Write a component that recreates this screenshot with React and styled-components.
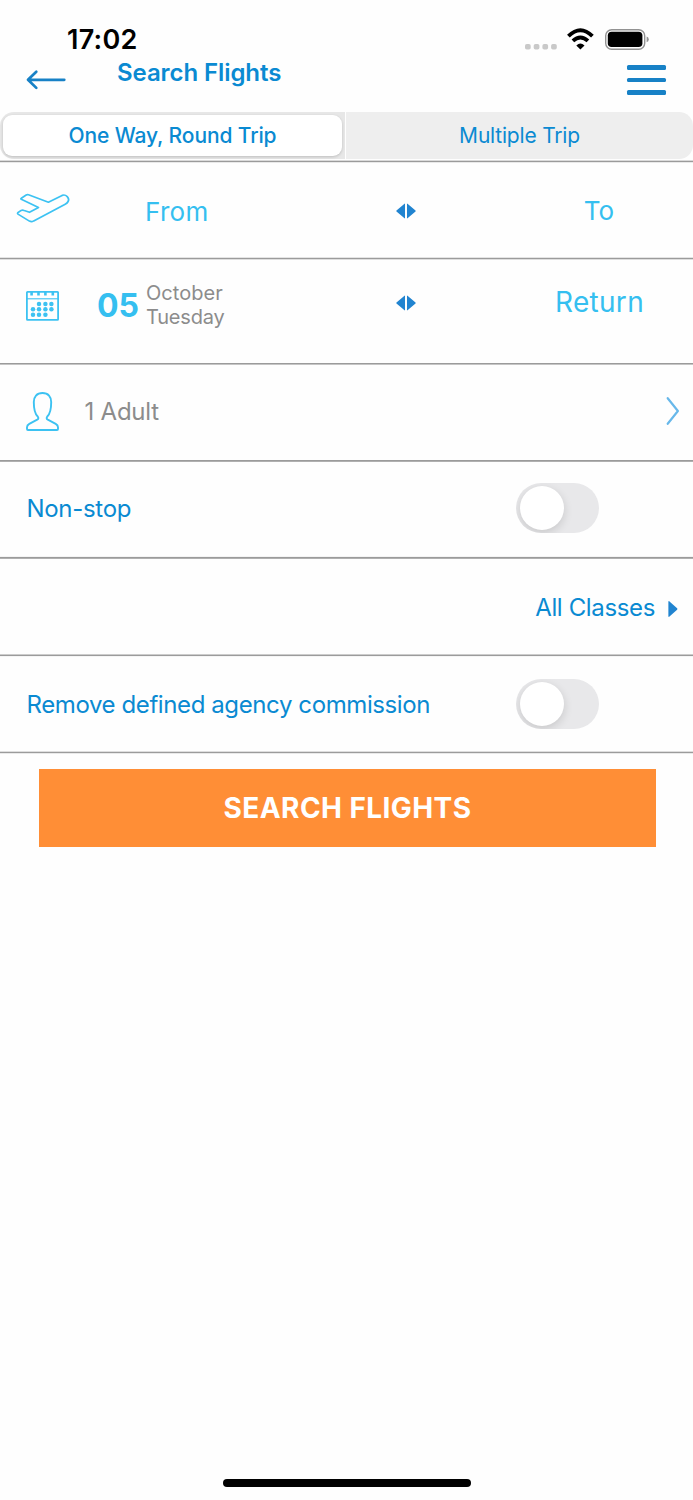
import React from "react";
import styled, { createGlobalStyle } from "styled-components";

const Global = createGlobalStyle`
  * { box-sizing: border-box; }
  body { margin: 0; background: #fefefe; font-family: Inter, "Liberation Sans", sans-serif; }
`;

const Screen = styled.main`
  display: flex;
  flex-direction: column;
  width: 693px;
  height: 1500px;
  background: #fefefe;
  overflow: hidden;
`;

const Text = styled.span`
  display: block;
  white-space: nowrap;
  color: ${(p) => p.$color || "#0a8ad2"};
  font-size: ${(p) => p.$size}px;
  font-weight: ${(p) => p.$weight || 400};
  letter-spacing: ${(p) => p.$track || 0}px;
  line-height: ${(p) => p.$line || 30}px;
`;

const StatusBar = styled.div`
  display: flex;
  justify-content: space-between;
  height: 58px;
  padding: 25px 44px 0 67px;
`;

const StatusIcons = styled.div`
  display: flex;
  align-items: flex-start;
  height: 30px;
`;

const Header = styled.header`
  display: flex;
  height: 54px;
  padding: 0 27px 0 26px;
`;

const BackButton = styled.button`
  display: block;
  width: 40px;
  height: 22px;
  margin: 11px 51px 0 0;
  padding: 0;
  border: 0;
  background: none;
`;

const MenuButton = styled.button`
  display: flex;
  flex-direction: column;
  justify-content: space-between;
  width: 39px;
  height: 30px;
  margin: 7px 0 0 auto;
  padding: 0;
  border: 0;
  background: none;
`;

const MenuBar = styled.span`
  display: block;
  height: 4.6px;
  border-radius: 1.5px;
  background: #1781c6;
`;

const Tabs = styled.nav`
  display: flex;
  gap: 1px;
  height: 47px;
`;

const TabSlot = styled.div`
  display: flex;
  width: ${(p) => (p.$active ? 345 : 347)}px;
  padding: ${(p) => (p.$active ? "3px 3px 3px 3px" : "0")};
  background: ${(p) => (p.$active ? "#e7e7e7" : "#eeeeee")};
  border-radius: ${(p) => (p.$active ? "14px 0 0 14px" : "0 14px 14px 0")};
`;

const Tab = styled.button`
  display: flex;
  flex: 1;
  align-items: center;
  justify-content: center;
  padding: ${(p) => (p.$active ? "1px 0 0" : "0")};
  border: 0;
  border-radius: 9px;
  font-family: inherit;
  background: ${(p) => (p.$active ? "#fff" : "transparent")};
  box-shadow: ${(p) => (p.$active ? "0 1px 3px rgba(0,0,0,.18)" : "none")};
`;

const Line = styled.hr`
  width: 100%;
  height: 3px;
  margin: 0;
  border: solid;
  border-width: 1px 0;
  border-color: ${(p) => p.$top} transparent ${(p) => p.$bottom};
  background: #9b9b9b;
  background-clip: padding-box;
`;

const Row = styled.section`
  display: flex;
  align-items: flex-start;
  height: ${(p) => p.$height}px;
  padding-left: ${(p) => p.$left || 0}px;
  padding-right: ${(p) => p.$right || 0}px;
`;

const Slot = styled.div`
  width: ${(p) => (p.$width ? `${p.$width}px` : "auto")};
  margin-top: ${(p) => p.$top}px;
  margin-left: ${(p) => p.$left || 0}px;
  display: flex;
  justify-content: ${(p) => p.$align || "flex-start"};
`;

const EndSlot = styled(Slot)`
  margin-left: auto;
  align-items: center;
  gap: 13px;
`;

const FromSlot = styled(Slot)`
  width: 251px;
`;

const DateGroup = styled.div`
  display: flex;
  width: 299px;
`;

const DateText = styled.div`
  margin: 21px 0 0 7px;
`;

const Switch = styled.button`
  width: 83px;
  height: 50px;
  margin-top: ${(p) => p.$top}px;
  margin-left: auto;
  padding: 3px 3px 3px 3.5px;
  border: 0;
  border-radius: 25px;
  background: #e8e8ea;
  overflow: hidden;
`;

const Knob = styled.span`
  display: block;
  width: 44px;
  height: 44px;
  border-radius: 50%;
  background: #fff;
  box-shadow: 0 3px 10px rgba(0, 0, 0, 0.14);
`;

const SearchButton = styled.button`
  display: flex;
  align-items: center;
  justify-content: center;
  width: 617px;
  height: 78px;
  margin: 15px 0 0 39px;
  padding: 0;
  border: 0;
  font-family: inherit;
  background: #ff8e36;
`;

const HomeIndicator = styled.div`
  width: 248px;
  height: 8px;
  margin: auto 0 13px 223px;
  border-radius: 4px;
  background: #000;
`;

const Art = styled.svg`
  display: block;
  flex: none;
  overflow: visible;
`;

const SwapIcon = () => (
  <Art width="20" height="16" viewBox="0 0 20 16" fill="#2184d0">
    <path d="M9 1.2V14.8Q9 15.8 8.2 15.1L.5 8.5Q0 8 .5 7.5L8.2 .9Q9 .2 9 1.2Z" />
    <path d="M11 1.2V14.8Q11 15.8 11.8 15.1L19.5 8.5Q20 8 19.5 7.5L11.8 .9Q11 .2 11 1.2Z" />
  </Art>
);

const dots = [
  [13, 12.9], [19.4, 12.9], [25.4, 12.9],
  [7, 18.2], [13, 18.2], [19.4, 18.2], [25.4, 18.2],
  [7, 23.7], [13, 23.7], [19.4, 23.7],
];

export default function App() {
  return (
    <>
      <Global />
      <Screen>
        <StatusBar>
          <Text $size={27} $weight={600} $track={0.25} $color="#000">17:02</Text>
          <StatusIcons>
            <Art width="124" height="24" viewBox="0 0 124 24">
              <g fill="#c9c9c9">
                {[0, 8.7, 17.4, 26.1].map((x) => (
                  <rect key={x} x={x} y="18.9" width="5.7" height="5.7" rx="1.8" />
                ))}
              </g>
              <g fill="none" stroke="#000" strokeWidth="3.8">
                <path d="M43.4 11.2Q55.4 -.8 67.4 11.2" />
                <path d="M47.9 15.9Q55.4 8.9 62.9 15.9" />
              </g>
              <path d="M55.4 24.6L51.3 20.5Q55.4 16.7 59.5 20.5Z" />
              <rect x="80.7" y="4.7" width="39" height="19.6" rx="6" fill="none" stroke="#929292" strokeWidth="1.4" />
              <rect x="82.8" y="6.8" width="34.6" height="15.3" rx="3.8" />
              <path d="M121.6 11.6Q123.8 12.3 123.8 14.4Q123.8 16.5 121.6 17.2Z" fill="#929292" />
            </Art>
          </StatusIcons>
        </StatusBar>
        <Header>
          <BackButton aria-label="Back">
            <Art width="40" height="22" viewBox="0 0 40 22" fill="none" stroke="#1781c6" strokeWidth="2.7" strokeLinecap="round" strokeLinejoin="round">
              <path d="M38.3 10.8H2M10.3 2.7L2 10.8L10.3 18.9" />
            </Art>
          </BackButton>
          <Text $size={24} $weight={600} $track={-0.08}>Search Flights</Text>
          <MenuButton aria-label="Menu"><MenuBar /><MenuBar /><MenuBar /></MenuButton>
        </Header>
        <Tabs>
          <TabSlot $active>
            <Tab $active><Text $size={21} $weight={500} $track={-0.12}>One Way, Round Trip</Text></Tab>
          </TabSlot>
          <TabSlot>
            <Tab><Text $size={21} $weight={400} $track={-0.2}>Multiple Trip</Text></Tab>
          </TabSlot>
        </Tabs>
        <Row $height={1} />
        <Line $top="#dadada" $bottom="#e9e9e9" />
        <Row $height={94} $left={16} $right={79}>
          <Slot $top={30} $width={129}>
            <Art width="54" height="30" viewBox="0 0 54 30" fill="none" stroke="#3cc2f2" strokeWidth="1.7" strokeLinejoin="round">
              <path d="M5.3 5.3L10.2 2Q11.2 1.3 12.5 1.7L32.4 9.2L46.1 2.4C49.9 .8 54 5.2 52.1 8.5Q51.3 10.1 49.2 11.2L17.7 27.9Q15.6 29.3 13.4 28.1L2 21.1Q1 20.3 2.1 19.5L5.2 17.4Q6.4 16.7 8.2 17.5L13.5 19.3L22.5 14.5L5.3 6.3Q4.5 5.8 5.3 5.3Z" />
            </Art>
          </Slot>
          <FromSlot $top={34}><Text $size={26} $track={0.3} $color="#35bff0">From</Text></FromSlot>
          <Slot $top={40}><SwapIcon /></Slot>
          <EndSlot $top={33}><Text $size={26} $color="#35bff0">To</Text></EndSlot>
        </Row>
        <Line $top="#e4e4e4" $bottom="#dedede" />
        <Row $height={102} $left={26} $right={49}>
          <Slot $top={31} $width={71}>
            <Art width="33" height="30" viewBox="0 0 33 30">
              <g fill="none" stroke="#3cc2f2" strokeWidth="1.8">
                <rect x=".9" y=".9" width="31.2" height="28" rx=".6" />
                <path d="M1 7.8H32" strokeWidth="1.1" />
                <path d="M5.6 1V4.4M12.5 1V4.4M19.4 1V4.4M26.8 1V4.4" strokeWidth="2.6" />
              </g>
              <g fill="#3cc2f2">
                {dots.map(([x, y]) => <circle key={`${x}-${y}`} cx={x} cy={y} r="2.25" />)}
              </g>
            </Art>
          </Slot>
          <DateGroup>
            <Slot $top={31} $width={42} $align="center"><Text $size={32} $weight={700} $color="#35bff0">05</Text></Slot>
            <DateText>
              <Text $size={20} $line={24} $track={0.05} $color="#8c8c8c">October</Text>
              <Text $size={20} $line={24} $track={-0.2} $color="#8c8c8c">Tuesday</Text>
            </DateText>
          </DateGroup>
          <Slot $top={35}><SwapIcon /></Slot>
          <EndSlot $top={27}><Text $size={28} $track={0.3} $color="#35bff0">Return</Text></EndSlot>
        </Row>
        <Line $top="#fefefe" $bottom="#c5c5c5" />
        <Row $height={94} $left={26} $right={14}>
          <Slot $top={27} $width={58.6}>
            <Art width="33" height="40" viewBox="0 0 33 40" fill="none" stroke="#3cc2f2" strokeWidth="1.9" strokeLinejoin="round">
              <path d="M16.5 1C10.7 1 7.8 4.8 7.8 10C7.8 16.5 8.5 21.4 11.7 24.5Q13.2 26.6 11.2 27.7L3.3 31.8Q1 33 1 35.3V37Q1 38 2 38H31Q32 38 32 37V35.3Q32 33 29.7 31.8L21.8 27.7Q19.8 26.6 21.3 24.5C24.5 21.4 25.2 16.5 25.2 10C25.2 4.8 22.3 1 16.5 1Z" />
            </Art>
          </Slot>
          <Slot $top={32}><Text $size={24} $track={-0.25} $color="#8c8c8c">1 Adult</Text></Slot>
          <EndSlot $top={32}>
            <Art width="13" height="28" viewBox="0 0 13 28" fill="none" stroke="#68b8ea" strokeWidth="2.2" strokeLinecap="round" strokeLinejoin="round">
              <path d="M1.7 1.2L11.9 14L1.7 26.8" />
            </Art>
          </EndSlot>
        </Row>
        <Line $top="#fefefe" $bottom="#b0b0b0" />
        <Row $height={94} $left={26.5} $right={94}>
          <Slot $top={32}><Text $size={24} $track={-0.3}>Non-stop</Text></Slot>
          <Switch $top={21} role="switch" aria-label="Non-stop"><Knob /></Switch>
        </Row>
        <Line $top="#f4f4f4" $bottom="#b0b0b0" />
        <Row $height={95} $right={15}>
          <EndSlot $top={34}>
            <Text $size={24} $track={-0.36}>All Classes</Text>
            <Art width="10" height="16" viewBox="0 -1 10 16" fill="#2184d0">
              <path d="M.4 1V15Q.4 16.5 1.5 15.6L9.1 8.8Q9.8 8 9.1 7.2L1.5.4Q.4-.5.4 1Z" />
            </Art>
          </EndSlot>
        </Row>
        <Line $top="#cccccc" $bottom="#f5f5f5" />
        <Row $height={94} $left={26.5} $right={94}>
          <Slot $top={33}><Text $size={24} $track={-0.4}>Remove defined agency commission</Text></Slot>
          <Switch $top={22} role="switch" aria-label="Remove defined agency commission"><Knob /></Switch>
        </Row>
        <Line $top="#dedede" $bottom="#e9e9e9" />
        <SearchButton><Text $size={28} $weight={700} $track={0.42} $color="#fff">SEARCH FLIGHTS</Text></SearchButton>
        <HomeIndicator />
      </Screen>
    </>
  );
}
